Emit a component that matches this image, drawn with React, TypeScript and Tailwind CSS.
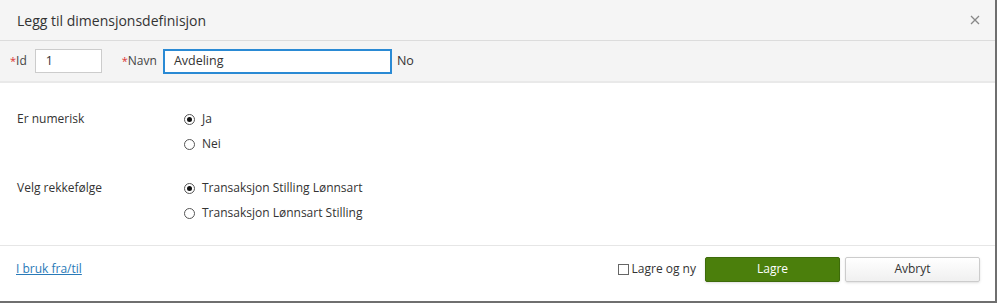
import React from "react";

function Radio({ checked }: { checked?: boolean }) {
  return (
    <span className="inline-flex h-[11px] w-[11px] items-center justify-center rounded-full border border-[#555] bg-white">
      {checked && <span className="h-[5px] w-[5px] rounded-full bg-[#111]" />}
    </span>
  );
}

export default function App() {
  return (
    <div
      className="flex h-[303px] w-[997px] flex-col border-b-2 border-r-2 border-[#6f6f6f] bg-white text-[12px] text-[#333]"
      style={{ fontFamily: '"Open Sans", "Noto Sans", sans-serif' }}
    >
      <div className="flex h-[41px] shrink-0 items-center justify-between border-b border-[#dcdcdc] bg-[#f5f5f5] pl-[17px] pr-[14px]">
        <span className="text-[14px] text-[#333]">Legg til dimensjonsdefinisjon</span>
        <svg width="10" height="10" viewBox="0 0 10 10" className="mr-[1px]">
          <path d="M1 1 L9 9 M9 1 L1 9" stroke="#888" strokeWidth="1.3" />
        </svg>
      </div>
      <div className="flex h-[42px] shrink-0 items-center border-b-2 border-[#e9e9e9] bg-[#f4f4f4] pl-[10px]">
        <span className="text-[12px] text-[#444]">
          <span className="text-[11px] text-[#d33]">*</span>Id
        </span>
        <div className="ml-[8px] flex h-[24px] w-[67px] items-center border border-[#ccc] bg-white pl-[10px] text-[12.5px]">
          1
        </div>
        <span className="ml-[20px] text-[12px] text-[#444]">
          <span className="text-[11px] text-[#d33]">*</span>Navn
        </span>
        <div className="ml-[6px] flex h-[25px] w-[229px] items-center border-2 border-[#2a8ad4] bg-white pl-[9px] text-[12.5px]">
          Avdeling
        </div>
        <span className="ml-[5px] text-[12.5px]">No</span>
      </div>
      <div className="flex flex-1 flex-col border-b border-[#e6e6e6] pl-[17px] pt-[27px]">
        <div className="flex">
          <div className="w-[167px]">Er numerisk</div>
          <div className="flex flex-col gap-[7px]">
            <div className="flex items-center gap-[7px]">
              <Radio checked />
              <span>Ja</span>
            </div>
            <div className="flex items-center gap-[7px]">
              <Radio />
              <span>Nei</span>
            </div>
          </div>
        </div>
        <div className="mt-[26px] flex">
          <div className="w-[167px]">Velg rekkefølge</div>
          <div className="flex flex-col gap-[7px]">
            <div className="flex items-center gap-[7px]">
              <Radio checked />
              <span>Transaksjon Stilling Lønnsart</span>
            </div>
            <div className="flex items-center gap-[7px]">
              <Radio />
              <span>Transaksjon Lønnsart Stilling</span>
            </div>
          </div>
        </div>
      </div>
      <div className="flex h-[55px] shrink-0 items-center justify-between pb-[9px] pl-[16px] pr-[15px]">
        <a className="text-[12px] text-[#2a7ab8] underline">I bruk fra/til</a>
        <div className="flex items-center">
          <span className="h-[11px] w-[11px] border border-[#666] bg-white" />
          <span className="ml-[3px] text-[12px]">Lagre og ny</span>
          <button className="ml-[9px] h-[25px] w-[135px] rounded-[2px] border border-[#3d6b0a] bg-[#4b7f0c] text-[12px] text-white shadow-sm">
            Lagre
          </button>
          <button className="ml-[5px] h-[25px] w-[135px] rounded-[2px] border border-[#ccc] bg-gradient-to-b from-white to-[#f0f0f0] text-[12px] text-[#333] shadow-sm">
            Avbryt
          </button>
        </div>
      </div>
    </div>
  );
}
